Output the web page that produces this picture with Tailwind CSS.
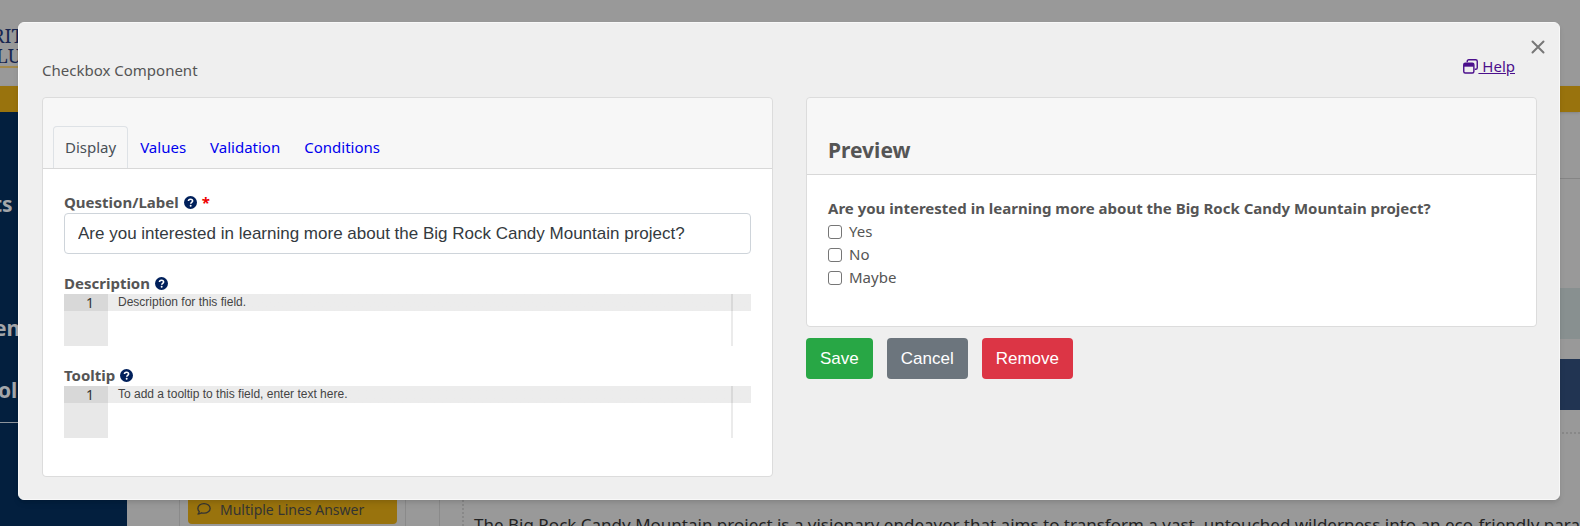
<!DOCTYPE html>
<html lang="en">
<head>
<meta charset="utf-8">
<meta name="viewport" content="width=device-width, initial-scale=1">
<title>Checkbox Component</title>
<script src="https://cdn.jsdelivr.net/npm/@tailwindcss/browser@4"></script>
</head>
<body class="relative h-screen overflow-hidden bg-[#999999] font-['Noto_Sans',sans-serif] text-[15px] text-[#555555]">

<!-- Dimmed page behind the dialog -->
<div class="flex h-full flex-col" aria-hidden="true">
  <header class="h-[86px] shrink-0 pt-[26px]">
    <div class="h-[42px] w-24 border-b-2 border-[#a48a4c] font-['Noto_Serif','Liberation_Serif',serif] text-[19px] leading-5 text-[#172650]">
      <div class="-ml-2">RIT</div>
      <div class="-ml-1">LU</div>
    </div>
  </header>
  <div class="h-[26px] shrink-0 bg-[#99730d] shadow"></div>
  <div class="flex min-h-0 flex-1">
    <nav class="w-[127px] shrink-0 bg-[#031f3e] text-[21px] font-bold text-[#a3a6aa]">
      <div class="-ml-[7px] pt-[78px] leading-7">ts</div>
      <div class="-ml-1.5 pt-24 leading-7">en</div>
      <div class="border-b border-[#8d949c] pt-[34px] pb-[18px] leading-7"><div class="-ml-0.5">ol</div></div>
    </nav>
    <main class="flex min-w-0 flex-1">
      <div class="ml-[52px] flex w-[227px] shrink-0 flex-col justify-end border-x border-[#8a8a8a] px-2 pb-[2px]">
        <div class="flex h-8 items-center gap-[9px] rounded bg-[#99730d] pt-0.5 pl-[9px] text-[#333333]">
          <svg class="size-[14px]" viewBox="0 0 16 16" fill="none" stroke="currentColor" stroke-width="1.5" stroke-linejoin="round"><path d="M8 1.800c3.900 0 7 2.400 7 5.500s-3.100 5.500-7 5.500c-1 0-2-.2-2.900-.5-1 .8-2.400 1.500-4 1.500.8-.9 1.300-1.800 1.500-2.900C1.600 9.900 1 8.700 1 7.300c0-3.100 3.100-5.500 7-5.500z"/></svg>
          <span class="text-[14px]">Multiple Lines Answer</span>
        </div>
      </div>
      <div class="ml-[33px] flex min-w-0 flex-1 border-l border-[#8a8a8a]">
        <div class="flex min-w-0 flex-1 flex-col">
          <div class="mt-[66px] h-px bg-[#858585]"></div>
          <div class="mt-[109px] h-[51px] bg-[#889090]"></div>
          <div class="mt-5 h-[51px] bg-[#213452]"></div>
          <div class="mt-[22px] ml-[22px] h-[94px] shrink-0 overflow-hidden border-t-2 border-l-2 border-dotted border-[#888888] pt-[79px] pl-[10px]">
            <p class="text-[17px] leading-6 whitespace-nowrap text-[#222222]">The Big Rock Candy Mountain project is a visionary endeavor that aims to transform a vast, untouched wilderness into an eco-friendly paradise</p>
          </div>
        </div>
      </div>
    </main>
  </div>
</div>

<!-- Dialog -->
<div role="dialog" aria-modal="true" aria-labelledby="dialog-title" class="absolute top-[22px] right-5 left-[18px] rounded-md border border-[#f8f8f8] bg-[#efefef] pr-[22px] pb-[22px] pl-[23px] shadow-md">
  <button type="button" aria-label="Close" class="absolute top-[17px] right-[14px] text-[#777777]">
    <svg class="size-[14px]" viewBox="0 0 14 14" stroke="currentColor" stroke-width="2" stroke-linecap="round" fill="none"><path d="M1.500 1.500l11 11M12.500 1.500l-11 11"/></svg>
  </button>

  <div class="flex items-start justify-between pt-[31px] pr-[22px] pb-[15px]">
    <h1 id="dialog-title" class="pt-1 leading-6">Checkbox Component</h1>
    <a href="#" class="flex items-center leading-6 text-[#4b0f8c] underline">
      <svg class="size-[15px]" viewBox="0 0 16 16" fill="none" stroke="currentColor" stroke-width="1.500"><path d="M4.500 3.500V2.500c0-1 .7-1.700 1.700-1.700h7.300c1 0 1.700.7 1.700 1.700v6.800c0 1-.7 1.700-1.700 1.700h-1"/><rect x=".8" y="4.600" width="10.800" height="10.400" rx="1.600"/><path d="M1 5h10.400v3.200H1z" fill="currentColor" stroke="none"/></svg><span class="whitespace-pre"> Help</span>
    </a>
  </div>

  <div class="grid grid-cols-2 items-start gap-[33px]">
    <!-- Settings -->
    <section class="rounded border border-[#dcdcdc]">
      <div role="tablist" class="flex rounded-t border-b border-[#d8d8d8] bg-[#f7f7f7] px-[10px] pt-7">
        <button type="button" role="tab" aria-selected="true" class="h-[42px] rounded-t border border-b-0 border-[#dee2e6] px-[11px] text-[#495057]">Display</button>
        <button type="button" role="tab" class="px-3 text-[#0000ee]">Values</button>
        <button type="button" role="tab" class="px-3 text-[#0000ee]">Validation</button>
        <button type="button" role="tab" class="px-3 text-[#0000ee]">Conditions</button>
      </div>
      <form class="flex flex-col rounded-b bg-white px-[21px] pt-[22px] pb-[38px]">
        <label for="question" class="flex items-center gap-[5px] leading-[22px] font-bold">Question/Label
          <svg class="size-[13px]" viewBox="0 0 16 16"><circle cx="8" cy="8" r="8" fill="#00205b"/><path d="M5.500 6.200c0-1.500 1.100-2.300 2.500-2.300s2.600.8 2.600 2.200c0 1.700-2.300 1.700-2.300 3.300" fill="none" stroke="#fff" stroke-width="1.900"/><circle cx="8.200" cy="11.900" r="1.200" fill="#fff"/></svg>
          <span class="text-[#ee0000]">*</span>
        </label>
        <input id="question" type="text" value="Are you interested in learning more about the Big Rock Candy Mountain project?" class="h-[41px] w-full rounded border border-[#ced4da] bg-white px-[13px] font-['Liberation_Sans',Arial,sans-serif] text-[17px] text-[#343a40]">

        <label for="description" class="mt-[18px] flex items-center gap-[5px] leading-[22px] font-bold">Description
          <svg class="size-[13px]" viewBox="0 0 16 16"><circle cx="8" cy="8" r="8" fill="#00205b"/><path d="M5.500 6.200c0-1.500 1.100-2.300 2.500-2.300s2.600.8 2.600 2.200c0 1.700-2.300 1.700-2.300 3.300" fill="none" stroke="#fff" stroke-width="1.900"/><circle cx="8.200" cy="11.900" r="1.200" fill="#fff"/></svg>
        </label>
        <div class="flex h-[52px]">
          <div class="w-11 shrink-0 bg-[#e8e8e8]"><div class="bg-[#d8d8d8] pr-[14px] text-right text-[14px] leading-[17px] text-[#333333]">1</div></div>
          <div class="relative flex-1 bg-linear-to-b from-[#ececec] from-[17px] to-white to-[17px]">
            <textarea id="description" class="block h-full w-full resize-none px-[10px] font-['Liberation_Sans',Arial,sans-serif] text-[12px] leading-[17px] text-[#444444]">Description for this field.</textarea>
            <div class="pointer-events-none absolute inset-y-0 right-[18px] w-[2px] bg-black/8"></div>
          </div>
        </div>

        <label for="tooltip" class="mt-[18px] flex items-center gap-[5px] leading-[22px] font-bold">Tooltip
          <svg class="size-[13px]" viewBox="0 0 16 16"><circle cx="8" cy="8" r="8" fill="#00205b"/><path d="M5.500 6.200c0-1.500 1.100-2.300 2.500-2.300s2.600.8 2.600 2.200c0 1.700-2.300 1.700-2.300 3.300" fill="none" stroke="#fff" stroke-width="1.900"/><circle cx="8.200" cy="11.900" r="1.200" fill="#fff"/></svg>
        </label>
        <div class="flex h-[52px]">
          <div class="w-11 shrink-0 bg-[#e8e8e8]"><div class="bg-[#d8d8d8] pr-[14px] text-right text-[14px] leading-[17px] text-[#333333]">1</div></div>
          <div class="relative flex-1 bg-linear-to-b from-[#ececec] from-[17px] to-white to-[17px]">
            <textarea id="tooltip" class="block h-full w-full resize-none px-[10px] font-['Liberation_Sans',Arial,sans-serif] text-[12px] leading-[17px] text-[#444444]">To add a tooltip to this field, enter text here.</textarea>
            <div class="pointer-events-none absolute inset-y-0 right-[18px] w-[2px] bg-black/8"></div>
          </div>
        </div>
      </form>
    </section>

    <!-- Preview -->
    <div>
      <section class="rounded border border-[#dcdcdc]">
        <div class="rounded-t border-b border-[#d8d8d8] bg-[#f7f7f7] px-[21px] pt-[38px] pb-[10px]">
          <h2 class="text-[21px] leading-7 font-bold">Preview</h2>
        </div>
        <fieldset class="rounded-b bg-white px-[21px] pt-[22px] pb-[37px] leading-[23px]">
          <legend class="contents font-bold"><span class="block">Are you interested in learning more about the Big Rock Candy Mountain project?</span></legend>
          <label class="flex items-center gap-[7px]"><input type="checkbox" class="size-[14px] appearance-none rounded-[3px] border border-[#767676] bg-white">Yes</label>
          <label class="flex items-center gap-[7px]"><input type="checkbox" class="size-[14px] appearance-none rounded-[3px] border border-[#767676] bg-white">No</label>
          <label class="flex items-center gap-[7px]"><input type="checkbox" class="size-[14px] appearance-none rounded-[3px] border border-[#767676] bg-white">Maybe</label>
        </fieldset>
      </section>
      <div class="mt-[11px] flex gap-[14px] font-['Liberation_Sans',Arial,sans-serif] text-[17px] text-white">
        <button type="button" class="h-[41px] rounded bg-[#28a745] px-[14px]">Save</button>
        <button type="button" class="h-[41px] rounded bg-[#6c757d] px-[14px]">Cancel</button>
        <button type="button" class="h-[41px] rounded bg-[#dc3545] px-[14px]">Remove</button>
      </div>
    </div>
  </div>
</div>
</body>
</html>
